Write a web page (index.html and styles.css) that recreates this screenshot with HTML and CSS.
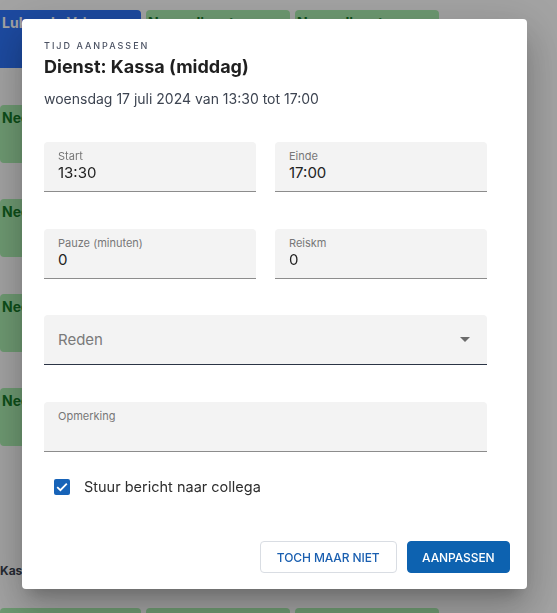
FILE: index.html
```html
<!DOCTYPE html>
<html lang="nl">
<head>
  <meta charset="UTF-8" />
  <meta name="viewport" content="width=device-width, initial-scale=1.0"/>
  <title>Rooster</title>
  <link rel="stylesheet" href="styles.css">
</head>
<body>
  <div class="rooster">
    <div class="week">
      <div class="row">
        <div class="tile blue">Lukas de Vries</div>
        <div class="tile green">Neem dienst over</div>
        <div class="tile green">Neem dienst over</div>
      </div>
      <div class="row">
        <div class="tile green">Neem dienst over</div>
        <div class="tile green">Neem dienst over</div>
        <div class="tile green">Neem dienst over</div>
      </div>
      <div class="row">
        <div class="tile green">Neem dienst over</div>
        <div class="tile green">Neem dienst over</div>
        <div class="tile green">Neem dienst over</div>
      </div>
      <div class="row">
        <div class="tile green">Neem dienst over</div>
        <div class="tile green">Neem dienst over</div>
        <div class="tile green">Neem dienst over</div>
      </div>
      <div class="row">
        <div class="tile green">Neem dienst over</div>
        <div class="tile green">Neem dienst over</div>
        <div class="tile green">Neem dienst over</div>
      </div>
    </div>

    <div class="day-title">Kassa (avond)</div>
    <div class="row">
      <div class="tile green"></div>
      <div class="tile green"></div>
      <div class="tile green"></div>
    </div>
  </div>

  <div class="overlay">
    <div class="dialog">
      <div class="dialog-head">
        <div class="eyebrow">Tijd aanpassen</div>
        <h2>Dienst: Kassa (middag)</h2>
        <p class="when">woensdag 17 juli 2024 van 13:30 tot 17:00</p>
      </div>

      <form class="form">
        <div class="pair">
          <label class="field">
            <span class="field-label">Start</span>
            <input type="text" value="13:30" />
          </label>
          <label class="field">
            <span class="field-label">Einde</span>
            <input type="text" value="17:00" />
          </label>
        </div>
        <div class="pair">
          <label class="field">
            <span class="field-label">Pauze (minuten)</span>
            <input type="text" value="0" />
          </label>
          <label class="field">
            <span class="field-label">Reiskm</span>
            <input type="text" value="0" />
          </label>
        </div>

        <div class="field select">
          <span class="placeholder">Reden</span>
          <svg class="arrow" width="10" height="5" viewBox="0 0 10 5"><path d="M0 0 L5 5 L10 0 Z" fill="#6b6b6b"/></svg>
        </div>

        <label class="field">
          <span class="field-label">Opmerking</span>
          <input type="text" value="" />
        </label>

        <label class="check">
          <span class="box">
            <svg width="12" height="10" viewBox="0 0 12 10"><path d="M1.2 5.2 L4.4 8.2 L10.8 1.6" fill="none" stroke="#fff" stroke-width="1.8"/></svg>
          </span>
          Stuur bericht naar collega
        </label>
      </form>

      <div class="actions">
        <button type="button" class="btn outline">Toch maar niet</button>
        <button type="button" class="btn primary">Aanpassen</button>
      </div>
    </div>
  </div>
</body>
</html>
```

FILE: styles.css
```css
body, html {
  margin: 0;
  padding: 0;
  height: 100%;
  background: #ffffff;
  font-family: Inter, 'Noto Sans', sans-serif;
  overflow: hidden;
}

.rooster {
  padding-top: 10px;
}

.week {
  display: flex;
  flex-direction: column;
  gap: 36.5px;
}

.row {
  display: grid;
  grid-template-columns: 141px 144px 144px;
  column-gap: 5px;
}

.tile {
  height: 58px;
  padding: 4px 2px;
  box-sizing: border-box;
  border-radius: 0 4px 4px 0;
  font-size: 14px;
  line-height: 18px;
  font-weight: 700;
  white-space: nowrap;
  overflow: hidden;
}

.tile.blue {
  background: #2d74fa;
  color: #ffffff;
}

.tile.green {
  background: #acf0b2;
  color: #147b28;
  border-radius: 4px;
}

.day-title {
  margin-top: 117px;
  height: 16px;
  line-height: 16px;
  font-size: 12px;
  font-weight: 700;
  color: #3a4250;
  margin-bottom: 29px;
}

.overlay {
  position: fixed;
  inset: 0;
  background: rgba(0, 0, 0, 0.36);
}

.dialog {
  position: absolute;
  left: 22px;
  top: 19px;
  width: 505px;
  height: 570px;
  box-sizing: border-box;
  padding: 20px 17px 16px 22px;
  background: #fff;
  border-radius: 4px;
  box-shadow: 0 11px 15px -7px rgba(0,0,0,0.2), 0 24px 38px 3px rgba(0,0,0,0.14), 0 9px 46px 8px rgba(0,0,0,0.12);
  display: flex;
  flex-direction: column;
}

.eyebrow {
  font-size: 9px;
  line-height: 14px;
  letter-spacing: 2px;
  text-transform: uppercase;
  font-weight: 500;
  color: #4a5162;
}

.dialog-head h2 {
  margin: 2px 0 0;
  font-size: 18px;
  line-height: 24px;
  font-weight: 700;
  color: #1f1f1f;
}

.when {
  margin: 10px 0 0;
  font-size: 14px;
  line-height: 20px;
  color: #3d4451;
}

.form {
  width: 443px;
  margin-top: 33px;
  display: flex;
  flex-direction: column;
  gap: 37px;
}

.pair {
  display: grid;
  grid-template-columns: 1fr 1fr;
  column-gap: 19px;
}

.field {
  display: flex;
  flex-direction: column;
  min-width: 0;
  height: 50px;
  box-sizing: border-box;
  padding: 7px 14px 0;
  background: #f3f3f3;
  border-radius: 4px 4px 0 0;
  border-bottom: 1px solid #8c8c8c;
}

.field-label {
  font-size: 11px;
  line-height: 14px;
  color: #777;
}

.field input {
  width: 100%;
  min-width: 0;
  border: none;
  background: transparent;
  padding: 0;
  margin: 0;
  font-family: inherit;
  font-size: 15px;
  line-height: 20px;
  height: 20px;
  color: #222;
  outline: none;
}

.field.select {
  flex-direction: row;
  align-items: center;
  justify-content: space-between;
  margin-top: -1px;
  height: 49.5px;
  padding: 0 17px 0 14px;
  border-bottom: 1.5px solid #2b3445;
}

.placeholder {
  font-size: 15px;
  color: #7a7a7a;
}

.check {
  display: flex;
  align-items: center;
  gap: 14px;
  margin-top: -14px;
  padding-left: 10px;
  height: 24px;
  font-size: 14.5px;
  color: #2e2e2e;
}

.box {
  width: 16px;
  height: 16px;
  border-radius: 2px;
  background: #1763b8;
  display: flex;
  align-items: center;
  justify-content: center;
}

.actions {
  margin-top: auto;
  display: flex;
  justify-content: flex-end;
  gap: 10px;
}

.btn {
  height: 32px;
  padding: 0 16px;
  border-radius: 4px;
  font-family: inherit;
  font-size: 12px;
  font-weight: 500;
  letter-spacing: -0.1px;
  text-transform: uppercase;
  cursor: pointer;
}

.btn.outline {
  background: #fff;
  border: 1px solid #d9dde3;
  color: #1a5fb0;
}

.btn.primary {
  padding: 0 14.5px;
  background: #0d62b0;
  border: 1px solid #0d62b0;
  color: #fff;
}
```
